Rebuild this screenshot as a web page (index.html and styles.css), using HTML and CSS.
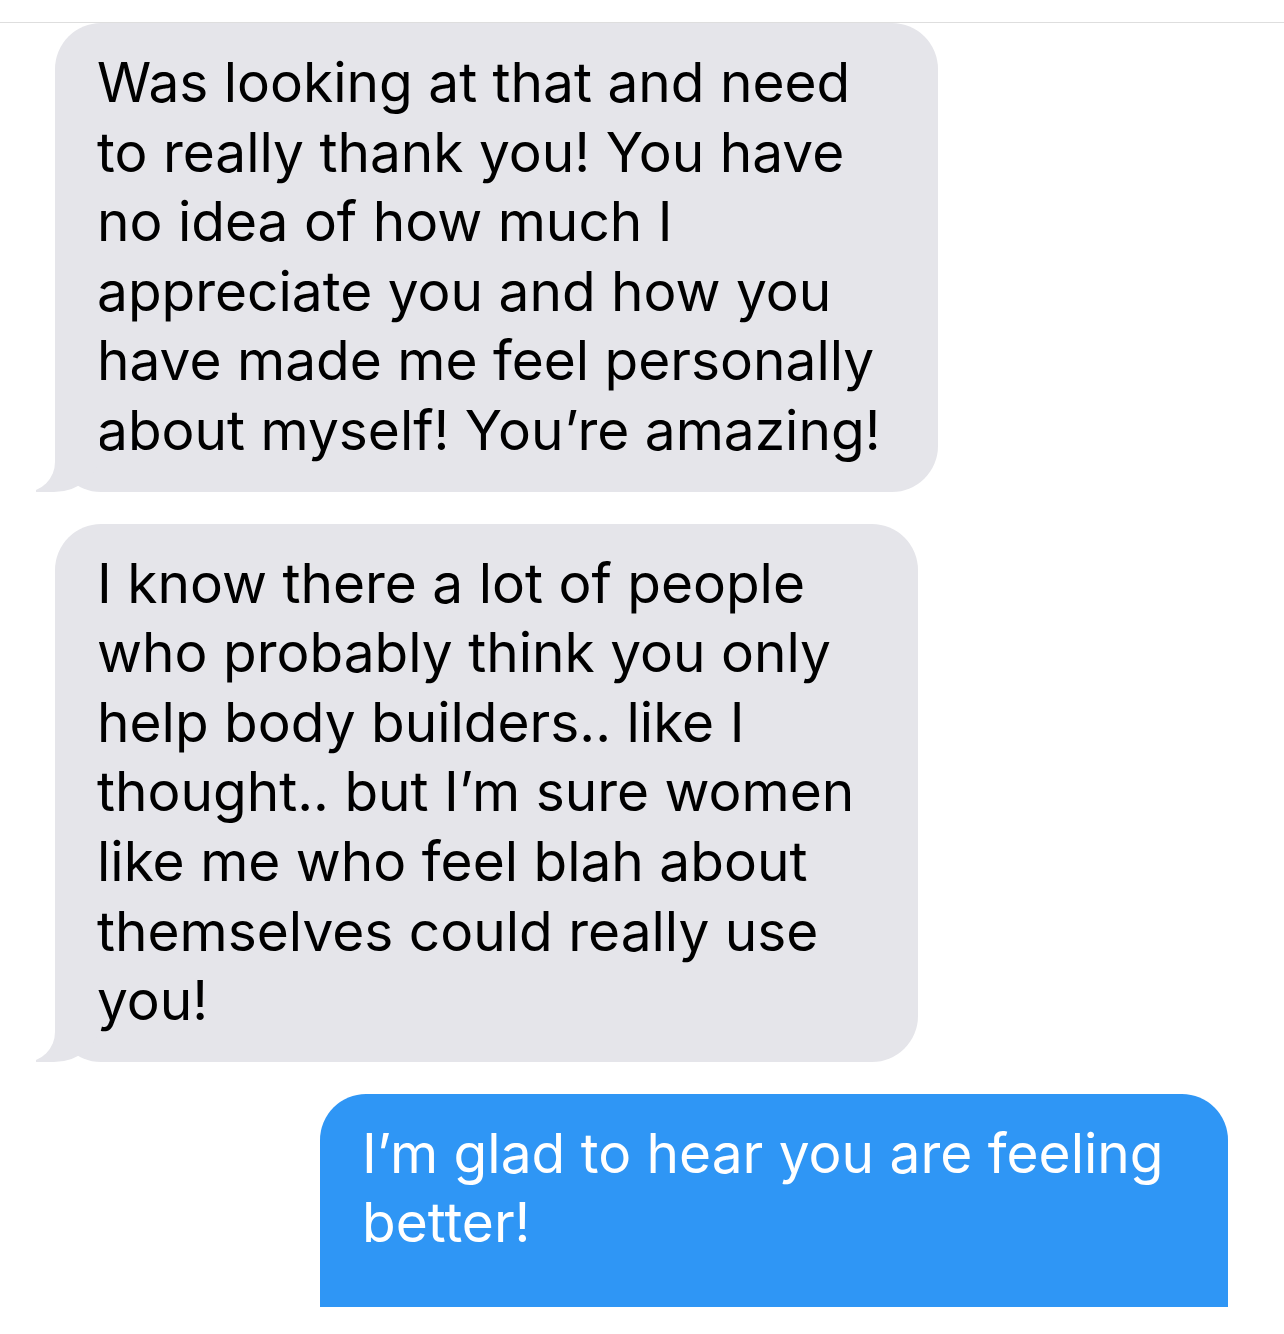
FILE: index.html
```html
<!DOCTYPE html>
<html lang="en">
<head>
    <meta charset="UTF-8">
    <meta name="viewport" content="width=device-width, initial-scale=1.0">
    <title>Messages</title>
    <link rel="stylesheet" href="styles.css">
</head>
<body>
    <main class="thread">
        <div class="bubble incoming msg-first">
            Was looking at that and need<br>
            to really thank you! You have<br>
            no idea of how much I<br>
            appreciate you and how you<br>
            have made me feel personally<br>
            about myself! You’re amazing!
        </div>
        <div class="bubble incoming msg-second">
            I know there a lot of people<br>
            who probably think you only<br>
            help body builders.. like I<br>
            thought.. but I’m sure women<br>
            like me who feel blah about<br>
            themselves could really use<br>
            you!
        </div>
        <div class="bubble outgoing msg-reply">
            I’m glad to hear you are feeling<br>
            better!
        </div>
    </main>
</body>
</html>
```

FILE: styles.css
```css
body {
    margin: 0;
    padding: 0;
    background-color: #fff;
    font-family: Inter, "Liberation Sans", Arial, sans-serif;
}

.thread {
    margin-top: 22px;
    height: 1284px;
    border-top: 1px solid #dedede;
    overflow: hidden;
    display: flex;
    flex-direction: column;
    align-items: flex-start;
    gap: 32px;
}

.bubble {
    position: relative;
    box-sizing: border-box;
    padding: 25px 20px 26px 42px;
    font-size: 55px;
    line-height: 69.6px;
    border-radius: 46px;
}

.incoming {
    margin-left: 55px;
    background-color: #e5e5ea;
    color: #000;
}

/* tail */
.incoming::before {
    content: "";
    position: absolute;
    bottom: 0;
    left: -19px;
    width: 64px;
    height: 60px;
    background-color: #e5e5ea;
    border-bottom-right-radius: 46px 40px;
}

.incoming::after {
    content: "";
    position: absolute;
    bottom: 0;
    left: -64px;
    width: 64px;
    height: 60px;
    background-color: #fff;
    border-bottom-right-radius: 30px;
}

.outgoing {
    align-self: flex-end;
    margin-right: 56px;
    background-color: #2f96f5;
    color: #fff;
    padding-bottom: 120px;
}

.msg-first {
    width: 883px;
}

.msg-second {
    width: 863px;
}

.msg-reply {
    width: 908px;
}
```
